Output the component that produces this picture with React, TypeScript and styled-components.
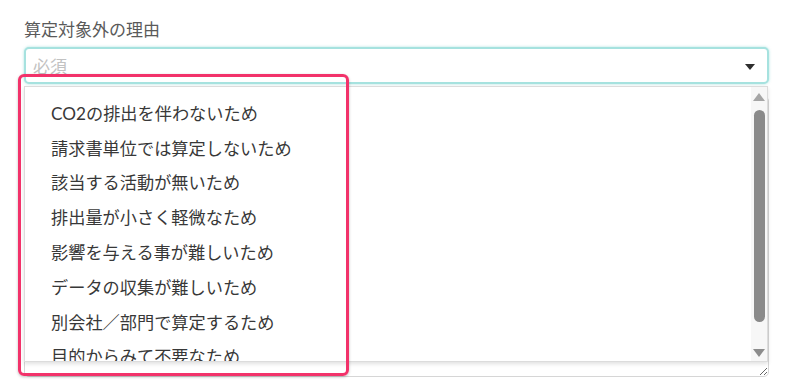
import * as React from 'react';
import styled, { createGlobalStyle } from 'styled-components';

const GlobalStyle = createGlobalStyle`
    html, body {
        margin: 0;
        padding: 0;
        background: #ffffff;
    }
    body {
        font-family: Lato, "Noto Sans CJK JP", sans-serif;
        color: #3a3a3a;
    }
`;

const Page = styled.div`
    position: relative;
    width: 800px;
    height: 390px;
    box-sizing: border-box;
    padding: 20px 31px 0 24px;
    overflow: hidden;
`;

const Label = styled.div`
    font-size: 17px;
    line-height: 20px;
    color: #5a5a5a;
    margin-bottom: 7px;
`;

const Select = styled.div`
    position: relative;
    z-index: 2;
`;

const SelectBox = styled.div`
    height: 37px;
    box-sizing: border-box;
    border: 2px solid #a6e2df;
    border-radius: 5px;
    box-shadow: 0 0 3px rgba(120, 210, 205, 0.6);
    display: flex;
    align-items: center;
    justify-content: space-between;
    padding: 0 12px 0 7px;
    background: #fff;
`;

const Placeholder = styled.span`
    font-size: 17px;
    color: #c2c2c2;
`;

const Caret = styled.span`
    width: 0;
    height: 0;
    border-left: 5px solid transparent;
    border-right: 5px solid transparent;
    border-top: 6px solid #2e2e2e;
    margin-top: 2px;
`;

const Menu = styled.div`
    position: absolute;
    top: calc(100% + 2px);
    left: 0;
    right: 1px;
    height: 276px;
    box-sizing: border-box;
    border: 1px solid #dcdcdc;
    background: #fff;
    box-shadow: 0 2px 4px rgba(0, 0, 0, 0.12);
    display: flex;
`;

const Options = styled.ul`
    flex: 1;
    margin: 0;
    padding: 8px 0 0 26px;
    list-style: none;
    overflow: hidden;
`;

const Option = styled.li`
    height: 34.8px;
    display: flex;
    align-items: center;
    font-size: 17.2px;
    color: #383838;
    white-space: nowrap;
`;

const Track = styled.div`
    width: 16px;
    background: #f7f7f7;
    display: flex;
    flex-direction: column;
    align-items: center;
    padding: 6px 0 4px;
    box-sizing: border-box;
`;

const Arrow = styled.span<{ $down?: boolean }>`
    width: 0;
    height: 0;
    border-left: 6px solid transparent;
    border-right: 6px solid transparent;
    ${p => p.$down
        ? 'border-top: 8px solid #8c8c8c;'
        : 'border-bottom: 8px solid #a5a5a5;'}
`;

const Thumb = styled.div`
    width: 11px;
    height: 212px;
    margin-top: 9px;
    border-radius: 6px;
    background: #8a8a8a;
`;

const Spacer = styled.div`
    flex: 1;
`;

const Notes = styled.textarea`
    display: block;
    width: 100%;
    height: 281px;
    margin-top: 12px;
    box-sizing: border-box;
    border: 1px solid #d6d6d6;
    border-radius: 5px;
    resize: vertical;
    font: inherit;
    outline: none;
`;

const Highlight = styled.div`
    position: absolute;
    left: 18px;
    top: 74px;
    width: 331px;
    height: 302px;
    box-sizing: border-box;
    border: 3px solid #f2326a;
    border-radius: 6px;
    box-shadow: 0 1px 3px rgba(0, 0, 0, 0.25);
    pointer-events: none;
    z-index: 3;
`;

const reasons = [
    'CO2の排出を伴わないため',
    '請求書単位では算定しないため',
    '該当する活動が無いため',
    '排出量が小さく軽微なため',
    '影響を与える事が難しいため',
    'データの収集が難しいため',
    '別会社／部門で算定するため',
    '目的からみて不要なため',
    'その他',
];

export default function App() {
    return (
        <>
            <GlobalStyle />
            <Page>
                <Label>算定対象外の理由</Label>
                <Select>
                    <SelectBox>
                        <Placeholder>必須</Placeholder>
                        <Caret />
                    </SelectBox>
                    <Menu>
                        <Options>
                            {reasons.map(r => <Option key={r}>{r}</Option>)}
                        </Options>
                        <Track>
                            <Arrow />
                            <Thumb />
                            <Spacer />
                            <Arrow $down />
                        </Track>
                    </Menu>
                </Select>
                <Notes />
                <Highlight />
            </Page>
        </>
    );
}
